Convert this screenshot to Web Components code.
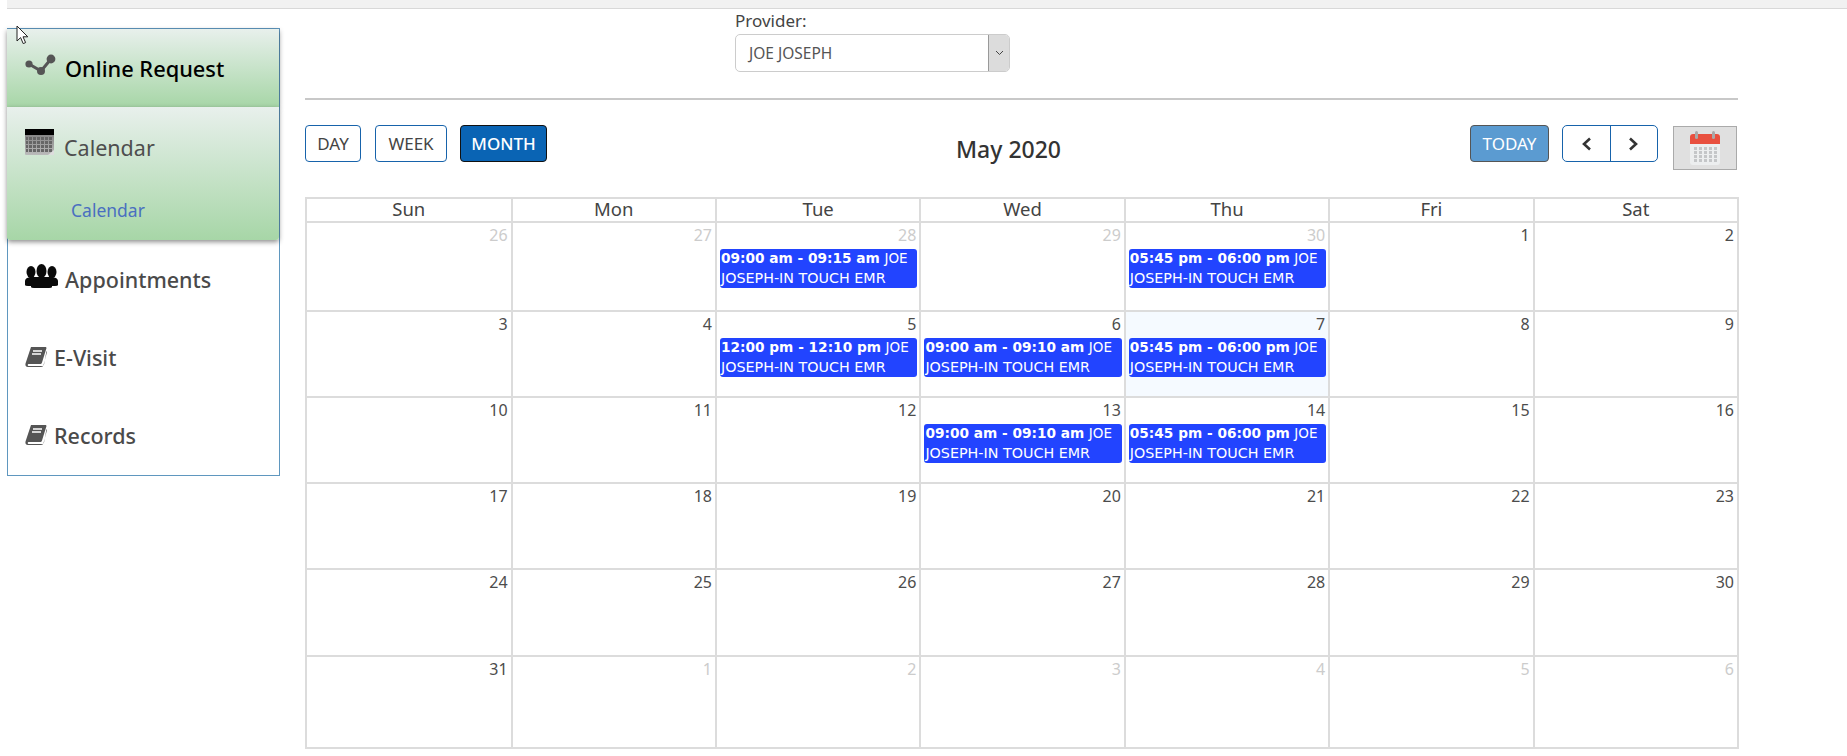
<!DOCTYPE html>
<html>
<head>
<meta charset="utf-8">
<title>Calendar</title>
<style>
  html, body { margin: 0; background: #fff; }
  body { font-family: "Noto Sans", "Open Sans", sans-serif; color: #444; width: 1847px; height: 756px; overflow: hidden; position: relative; }
  .page { display: flex; align-items: flex-start; padding-left: 7px; }
  .cursor { position: absolute; left: 16px; top: 25px; }
</style>
</head>
<body>
<top-bar></top-bar>
<div class="page">
  <side-nav>
    <nav-panel label="Online Request" strong icon="share"></nav-panel>
    <nav-panel label="Calendar" icon="calendar" sub="Calendar"></nav-panel>
    <nav-link label="Appointments" icon="group" h="78"></nav-link>
    <nav-link label="E-Visit" icon="book" h="78"></nav-link>
    <nav-link label="Records" icon="book" h="78"></nav-link>
  </side-nav>
  <main-area>
    <provider-select label="Provider:" value="JOE JOSEPH"></provider-select>
    <cal-toolbar title="May 2020"></cal-toolbar>
    <cal-grid></cal-grid>
  </main-area>
</div>
<svg class="cursor" width="13" height="20" viewBox="0 0 13 20"><path d="M1 1v15l3.6-3.4 2.6 6 2.4-1-2.6-5.8h4.8z" fill="#fff" stroke="#222" stroke-width="1"/></svg>

<script>
// svg icons used in the side menu
const ICONS = {
  share: `<svg width="32" height="22" viewBox="0 0 32 22"><path d="M4 10l12 7L26 5" fill="none" stroke="#555" stroke-width="3"/><circle cx="4" cy="10" r="3.600" fill="#555"/><circle cx="16" cy="17" r="4" fill="#555"/><circle cx="26" cy="5" r="4.400" fill="#555"/></svg>`,
  calendar: `<svg width="30" height="27" viewBox="0 0 30 27"><defs><linearGradient id="g" x1="0" y1="0" x2="0" y2="1"><stop offset="0" stop-color="#777"/><stop offset="1" stop-color="#bbb"/></linearGradient><pattern id="p" width="4" height="4" patternUnits="userSpaceOnUse"><rect width="3" height="3" fill="#666"/></pattern></defs><rect width="29" height="26" rx="1" fill="url(#g)"/><rect width="29" height="6" fill="#000"/><rect x="1" y="8" width="27" height="16" fill="url(#p)"/><path d="M29 21l-6 5h6z" fill="#ddd"/></svg>`,
  group: `<svg width="33" height="24" viewBox="0 0 33 24"><g fill="#0a0a0a"><ellipse cx="6" cy="8" rx="4.500" ry="6"/><ellipse cx="16.500" cy="7" rx="5" ry="7"/><ellipse cx="27" cy="8" rx="4.500" ry="6"/><path d="M0 21v-4q0-3 5-4h23q5 1 5 4v4q0 1-3 1h-3v1q0 1-3 1H9q-3 0-3-1v-1H3q-3 0-3-1z"/></g></svg>`,
  book: `<svg width="22" height="20" viewBox="0 0 22 20"><path d="M6 0h15l.5 1-4.500 14.500c-.3 1-1 1.500-2 1.500H3.500c-1 0-1 2 0 2H17c1 0 1.500-.5 2-1.500L21.500 4l.5 1-3.500 13c-.3 1-1 2-2.500 2H3c-2 0-3-1.500-2.500-3.500z" fill="#555"/><path d="M8 4h9M7 7h9" stroke="#fff" stroke-width="1.300"/></svg>`
};

class TopBar extends HTMLElement {
  connectedCallback() {
    this.attachShadow({ mode: 'open' });
    this.shadowRoot.innerHTML = `<style>
      :host { display: block; height: 8px; margin-left: 7px; background: #f1f1f1; border-bottom: 1px solid #d8d8d8; margin-bottom: 19px; }
    </style>`;
  }
}
customElements.define('top-bar', TopBar);

class SideNav extends HTMLElement {
  connectedCallback() {
    this.attachShadow({ mode: 'open' });
    this.shadowRoot.innerHTML = `<style>
      :host { display: block; box-sizing: border-box; width: 273px; height: 448px; border: 1px solid #5f97bf; flex: none; }
    </style><slot></slot>`;
  }
}
customElements.define('side-nav', SideNav);

class NavPanel extends HTMLElement {
  connectedCallback() {
    const strong = this.hasAttribute('strong');
    const sub = this.getAttribute('sub');
    this.attachShadow({ mode: 'open' });
    this.shadowRoot.innerHTML = `<style>
      :host { display: block; box-sizing: border-box; margin-left: -1px; height: ${strong ? 78 : 133}px;
        background: linear-gradient(#e8f0ec, #a7d6a7); box-shadow: 0 2px 5px rgba(0,0,0,.45); position: relative; border-radius: ${strong ? '0' : '0 0 3px 3px'}; }
      .head { display: flex; align-items: ${strong ? 'center' : 'flex-start'}; height: 78px; padding-left: 18px; box-sizing: border-box; padding-top: ${strong ? 2 : 22}px; }
      .icon { display: flex; margin-right: ${strong ? 8 : 9}px; margin-top: ${strong ? -8 : 0}px; }
      .txt { font-size: ${strong ? 21.8 : 21.5}px; font-weight: ${strong ? 500 : 400}; color: ${strong ? '#000' : '#4e4e4e'}; line-height: 28px; margin-top: ${strong ? 0 : 5}px; }
      .sub { font-size: 17.500px; color: #4a6fc0; margin: 13px 0 0 64px; line-height: 24px; }
    </style>
    <div class="head"><span class="icon">${ICONS[this.getAttribute('icon')]}</span><span class="txt">${this.getAttribute('label')}</span></div>
    ${sub ? `<div class="sub">${sub}</div>` : ''}`;
  }
}
customElements.define('nav-panel', NavPanel);

class NavLink extends HTMLElement {
  connectedCallback() {
    const book = this.getAttribute('icon') == 'book';
    this.attachShadow({ mode: 'open' });
    this.shadowRoot.innerHTML = `<style>
      :host { display: flex; align-items: center; height: ${this.getAttribute('h')}px; padding-left: 17px; font-size: 21.500px; font-weight: 500; color: #4a4a4a; }
      .icon { display: flex; margin-right: 7px; margin-top: ${book ? 0 : -6}px; }
    </style><span class="icon">${ICONS[this.getAttribute('icon')]}</span><span>${this.getAttribute('label')}</span>`;
  }
}
customElements.define('nav-link', NavLink);

class MainArea extends HTMLElement {
  connectedCallback() {
    this.attachShadow({ mode: 'open' });
    this.shadowRoot.innerHTML = `<style>
      :host { display: block; width: 1434px; margin-left: 25px; margin-top: -16px; flex: none; }
    </style><slot></slot>`;
  }
}
customElements.define('main-area', MainArea);

class ProviderSelect extends HTMLElement {
  connectedCallback() {
    this.attachShadow({ mode: 'open' });
    this.shadowRoot.innerHTML = `<style>
      :host { display: block; height: 86px; border-bottom: 2px solid #c8c8c8; padding-left: 430px; margin-right: 1px; }
      label { display: block; font-size: 17px; line-height: 18px; height: 22px; color: #444; }
      .box { display: flex; width: 275px; height: 38px; box-sizing: border-box; border: 1px solid #ccc; border-radius: 5px; overflow: hidden; }
      .val { flex: 1; font-size: 15.500px; line-height: 36px; padding-left: 13px; color: #555; }
      .arr { width: 20px; background: #dcdcdc; border-left: 1px solid #999; display: flex; align-items: center; justify-content: center; }
    </style>
    <label>${this.getAttribute('label')}</label>
    <div class="box"><span class="val">${this.getAttribute('value')}</span>
      <span class="arr"><svg width="9" height="6" viewBox="0 0 9 6"><path d="M1 1l3.500 3.500L8 1" fill="none" stroke="#444" stroke-width="1"/></svg></span></div>`;
  }
}
customElements.define('provider-select', ProviderSelect);

class CalToolbar extends HTMLElement {
  connectedCallback() {
    this.attachShadow({ mode: 'open' });
    this.shadowRoot.innerHTML = `<style>
      :host { display: flex; align-items: flex-start; height: 72px; padding-top: 25px; margin-right: 2px; }
      button { font: 17px "Noto Sans", sans-serif; height: 37px; box-sizing: border-box; background: #fff; color: #444; border: 1px solid #1763ab; border-radius: 4px; padding: 0; }
      .day { width: 56px; margin-right: 14px; }
      .week { width: 72px; margin-right: 13px; }
      .month { width: 87px; background: #0a64b4; color: #fff; border-color: #111; font-weight: 500; }
      h2 { flex: 1; margin: 9px 0 0; font-size: 23px; font-weight: 500; text-align: center; color: #333; line-height: 30px; }
      .today { width: 79px; background: #5b9bd1; color: #fff; border-color: #555; margin-right: 13px; }
      .pair { display: flex; width: 96px; height: 37px; box-sizing: border-box; border: 1px solid #1763ab; border-radius: 5px; margin-right: 15px; }
      .pair span { flex: 1; display: flex; align-items: center; justify-content: center; }
      .pair span + span { border-left: 1px solid #1763ab; }
      .pick { width: 64px; height: 44px; box-sizing: border-box; background: #e0e0e0; border: 1px solid #aaa; display: flex; align-items: center; justify-content: center; margin-top: 1px; }
    </style>
    <button class="day">DAY</button><button class="week">WEEK</button><button class="month">MONTH</button>
    <h2>${this.getAttribute('title')}</h2>
    <button class="today">TODAY</button>
    <div class="pair">
      <span><svg width="11" height="14" viewBox="0 0 11 14"><path d="M9 1.500L3 7l6 5.500" fill="none" stroke="#333" stroke-width="2.600"/></svg></span>
      <span><svg width="11" height="14" viewBox="0 0 11 14"><path d="M2 1.500L8 7l-6 5.500" fill="none" stroke="#333" stroke-width="2.600"/></svg></span>
    </div>
    <div class="pick"><svg width="30" height="34" viewBox="0 0 30 34">
      <rect x="0" y="3" width="30" height="31" rx="3" fill="#eceeef"/>
      <path d="M0 13V6a3 3 0 0 1 3-3h24a3 3 0 0 1 3 3v7z" fill="#e8503f"/>
      <rect x="5" y="0" width="3" height="8" rx="1.500" fill="#a9a9a9"/><rect x="22" y="0" width="3" height="8" rx="1.500" fill="#a9a9a9"/>
      <g fill="#c4c6c8">${[16,20,24,28].map(y => [4,9,14,19,24].map(x => `<rect x="${x}" y="${y}" width="3" height="3"/>`).join('')).join('')}</g>
    </svg></div>`;
  }
}
customElements.define('cal-toolbar', CalToolbar);

class CalEvent extends HTMLElement {
  connectedCallback() {
    this.attachShadow({ mode: 'open' });
    this.shadowRoot.innerHTML = `<style>
      :host { display: block; background: #2244ff; color: #fff; border-radius: 3px; font-family: "DejaVu Sans", sans-serif; font-size: 14.300px; line-height: 19.500px; padding: 0 1px; height: 39px; margin: 0 1px 0 2px; overflow: hidden; white-space: nowrap; }
      b { font-weight: 700; font-size: 13.700px; }
      span { font-size: 13.500px; }
      div { height: 19.500px; }
    </style><div><b>${this.getAttribute('time')}</b> <span>${this.getAttribute('who')}</span></div><div><slot></slot></div>`;
  }
}
customElements.define('cal-event', CalEvent);

class CalGrid extends HTMLElement {
  connectedCallback() {
    const heads = ['Sun', 'Mon', 'Tue', 'Wed', 'Thu', 'Fri', 'Sat'];
    // [day, faded]
    const days = [];
    [26, 27, 28, 29, 30].forEach(d => days.push([d, true]));
    for (let d = 1; d <= 31; d++) days.push([d, false]);
    for (let d = 1; d <= 6; d++) days.push([d, true]);
    const events = {
      2: '09:00 am - 09:15 am', 4: '05:45 pm - 06:00 pm',
      9: '12:00 pm - 12:10 pm', 10: '09:00 am - 09:10 am', 11: '05:45 pm - 06:00 pm',
      17: '09:00 am - 09:10 am', 18: '05:45 pm - 06:00 pm'
    };
    const cells = days.map((x, i) => `<div class="cell${x[1] ? ' off' : ''}${i == 11 ? ' today' : ''}"><div class="num">${x[0]}</div>${
      events[i] ? `<cal-event time="${events[i]}" who="JOE">JOSEPH-IN TOUCH EMR</cal-event>` : ''}</div>`).join('');
    this.attachShadow({ mode: 'open' });
    this.shadowRoot.innerHTML = `<style>
      :host { display: grid; grid-template-columns: 203.600px repeat(6, 1fr); grid-template-rows: 22px 87px 84px 84px 84px 85px 90px; gap: 2px; padding: 2px; background: #dcdcdc; font-size: 17px; color: #444; width: 1434px; box-sizing: border-box; }
      .head { background: #fff; text-align: center; line-height: 20px; font-size: 18.500px; }
      .cell { background: #fff; padding: 0 1px; min-width: 0; }
      .num { text-align: right; line-height: 24px; height: 26px; padding-right: 2px; font-size: 16px; color: #4c4c4c; }
      .off .num { color: #ccc; }
      .today { background: #f5faff; }
    </style>${heads.map(h => `<div class="head">${h}</div>`).join('')}${cells}`;
  }
}
customElements.define('cal-grid', CalGrid);
</script>
</body>
</html>
